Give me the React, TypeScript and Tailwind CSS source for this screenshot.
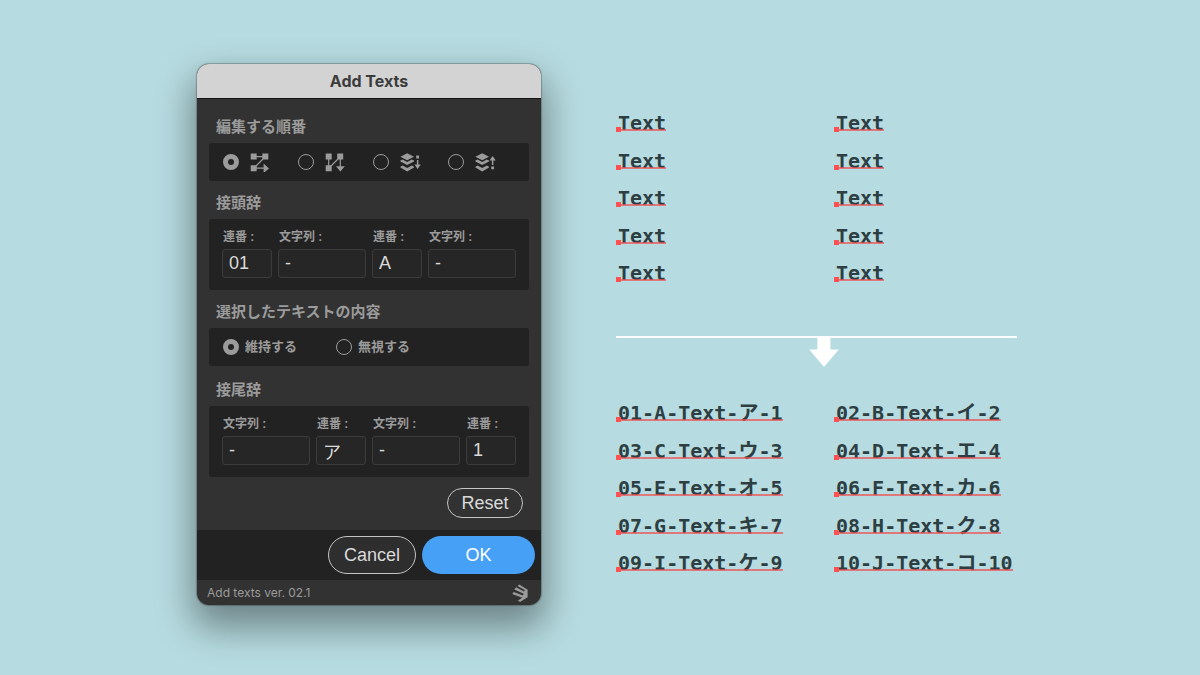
import { useId, type ReactNode } from "react";

const ORDERS = [
  { name: "row", icon: <RowOrderIcon /> },
  { name: "column", icon: <ColumnOrderIcon /> },
  { name: "layer down", icon: <LayerDownIcon /> },
  { name: "layer up", icon: <LayerUpIcon /> },
];

const PREFIX = [
  { label: "連番 :", value: "01" },
  { label: "文字列 :", value: "-", wide: true },
  { label: "連番 :", value: "A" },
  { label: "文字列 :", value: "-", wide: true },
];

const SUFFIX = [
  { label: "文字列 :", value: "-", wide: true },
  { label: "連番 :", value: "ア" },
  { label: "文字列 :", value: "-", wide: true },
  { label: "連番 :", value: "1" },
];

const BEFORE = Array.from({ length: 10 }, () => "Text");

const AFTER = [
  "01-A-Text-ア-1",
  "02-B-Text-イ-2",
  "03-C-Text-ウ-3",
  "04-D-Text-エ-4",
  "05-E-Text-オ-5",
  "06-F-Text-カ-6",
  "07-G-Text-キ-7",
  "08-H-Text-ク-8",
  "09-I-Text-ケ-9",
  "10-J-Text-コ-10",
];

function RowOrderIcon() {
  return (
    <svg viewBox="0 0 20 20" className="size-5" fill="currentColor" stroke="currentColor" aria-hidden="true">
      <path stroke="none" d="M.7 1.6h6v6h-6zM12.3 1.6h6v6h-6zM.7 13.2h6v6h-6zM13.6 11.6l5.4 4.8-5.4 4.6z" />
      <path fill="none" strokeWidth="1.2" d="M6 4.6h7M13 7L6 14M6 16.2h9" />
    </svg>
  );
}

function ColumnOrderIcon() {
  return (
    <svg viewBox="0 0 20 20" className="size-5" fill="currentColor" stroke="currentColor" aria-hidden="true">
      <path stroke="none" d="M.7 1.6h6v6h-6zM12.2 1.6h6v6h-6zM.7 13.2h6v6h-6zM11 14.2h8.8l-4.4 5.4z" />
      <path fill="none" strokeWidth="1.2" d="M3.7 7v7M6 14l7-7M15.3 7v9" />
    </svg>
  );
}

function Layers() {
  return (
    <>
      <path d="M7.2 1.2l6.8 3.5-6.8 3.5L.4 4.7z" />
      <path d="M.4 8.6l2.2-1.1 4.6 2.4 4.6-2.4L14 8.6v.9l-6.8 3.6L.4 9.5z" />
      <path d="M.4 14.8l2.2-1.2 4.6 2.4 4.6-2.4 2.2 1.2v.8l-6.8 3.8-6.8-3.8z" />
    </>
  );
}

function LayerDownIcon() {
  return (
    <svg viewBox="0 0 22 20" className="h-5 w-[22px]" fill="currentColor" aria-hidden="true">
      <Layers />
      <path d="M16.2 3.6h2.9v2.9h-2.9zM16.9 8h1.5v4.4h2.4L17.6 17l-3.1-4.6h2.4z" />
    </svg>
  );
}

function LayerUpIcon() {
  return (
    <svg viewBox="0 0 22 20" className="h-5 w-[22px]" fill="currentColor" aria-hidden="true">
      <Layers />
      <path d="M16.2 14.4h2.9v2.9h-2.9zM16.9 13h1.5V8.6h2.4L17.6 4l-3.1 4.6h2.4z" />
    </svg>
  );
}

function Logo() {
  return (
    <svg viewBox="0 0 16 18" className="h-[18px] w-4" fill="currentColor" aria-hidden="true">
      <path d="M7.3.6l8.3 5.2v7.4L8 18l-2-1.6 4.2-2.6L.2 10l1.6-2 9 3.4 1-1.6L2.3 5.4 4 3.3l8 4.2.8-1.6L5.5 2z" />
    </svg>
  );
}

function Section({ title, className, children }: { title: string; className: string; children: ReactNode }) {
  return (
    <fieldset>
      <legend className={`w-full pb-0.5 pl-[7px] text-[15px] font-semibold leading-7 text-[#9b9b9b] ${className}`}>
        {title}
      </legend>
      <div className="rounded-[3px] bg-[#222]">{children}</div>
    </fieldset>
  );
}

function Radio({ group, checked, name, children }: { group: string; checked: boolean; name?: string; children: ReactNode }) {
  return (
    <label className="flex items-center">
      <input
        type="radio"
        name={group}
        defaultChecked={checked}
        aria-label={name}
        className="size-4 shrink-0 appearance-none rounded-full border border-[#9b9b9b] checked:border-[5px]"
      />
      {children}
    </label>
  );
}

function Fields({ items }: { items: { label: string; value: string; wide?: boolean }[] }) {
  const id = useId();
  return (
    <div className="flex gap-1.5 px-[13px] pt-[9px] pb-3">
      {items.map((f, i) => (
        <div key={i} className={f.wide ? "w-[88px]" : "w-[50px]"}>
          <label htmlFor={`${id}-${i}`} className="block pl-px text-xs font-semibold leading-[18px] text-[#9b9b9b]">
            {f.label}
          </label>
          <input
            id={`${id}-${i}`}
            type="text"
            defaultValue={f.value}
            className="mt-[3px] block h-[29px] w-full rounded-[3px] border border-[#3c3c3c] bg-[#262626] px-1.5 text-lg text-[#dadada]"
          />
        </div>
      ))}
    </div>
  );
}

function Dialog() {
  return (
    <form
      role="dialog"
      aria-label="Add Texts"
      onSubmit={(e) => e.preventDefault()}
      className="w-[344px] shrink-0 overflow-hidden rounded-xl bg-[#323232] font-['Liberation_Sans','Noto_Sans_CJK_JP',sans-serif] shadow-[0_0_1px_1px_rgba(0,0,0,0.25),0_18px_36px_4px_rgba(0,0,0,0.4)]"
    >
      <h1 className="border-b border-[#161616] bg-[#d3d3d3] text-center font-['Inter',sans-serif] text-base font-bold leading-[34px] text-[#3c3c3c]">
        Add Texts
      </h1>

      <div className="px-3 pt-1.5 pb-3">
        <Section title="編集する順番" className="pt-2">
          <div className="grid h-[38px] grid-cols-[repeat(4,75px)] items-center pl-3.5 text-[#9b9b9b]">
            {ORDERS.map((o, i) => (
              <Radio key={o.name} group="order" checked={i === 0} name={o.name}>
                <span className="pl-[11px]">{o.icon}</span>
              </Radio>
            ))}
          </div>
        </Section>

        <Section title="接頭辞" className="pt-2">
          <Fields items={PREFIX} />
        </Section>

        <Section title="選択したテキストの内容" className="pt-2">
          <div className="grid h-[38px] grid-cols-[repeat(2,113px)] items-center pl-3.5 text-[13px] font-semibold text-[#9b9b9b]">
            <Radio group="content" checked>
              <span className="pl-1.5">維持する</span>
            </Radio>
            <Radio group="content" checked={false}>
              <span className="pl-1.5">無視する</span>
            </Radio>
          </div>
        </Section>

        <Section title="接尾辞" className="pt-2.5">
          <Fields items={SUFFIX} />
        </Section>

        <div className="flex justify-end pt-[11px] pr-1.5">
          <button type="reset" className="h-[30px] w-[76px] rounded-full border border-[#c4c4c4] text-lg leading-7 text-[#dadada]">
            Reset
          </button>
        </div>
      </div>

      <div className="flex justify-end gap-1.5 bg-[#222] p-1.5">
        <button type="button" className="h-[38px] w-[88px] rounded-full border border-[#c4c4c4] bg-[#2e2e2e] text-lg text-[#dadada]">
          Cancel
        </button>
        <button type="submit" className="h-[38px] w-[113px] rounded-full bg-[#46a0f5] text-lg text-white">
          OK
        </button>
      </div>

      <div className="flex h-[25px] items-center justify-between pr-[13px] pl-2.5 text-[#9b9b9b]">
        <span className="font-['Inter',sans-serif] text-xs">Add texts ver. 02.1</span>
        <Logo />
      </div>
    </form>
  );
}

function TextList({ items }: { items: string[] }) {
  return (
    <ul className="grid grid-cols-[218px_1fr] grid-rows-[38px_37px_38px_37px_24px] font-['DejaVu_Sans_Mono','Noto_Sans_CJK_JP',monospace] text-xl font-bold text-[#2d3f42]">
      {items.map((text, i) => (
        <li key={i} className="relative h-6 w-fit pl-0.5 leading-6 whitespace-nowrap">
          {text}
          {/* baseline with its anchor point */}
          <span className="absolute inset-x-0 bottom-1 h-0.5 bg-[#f04e50]/70" />
          <span className="absolute bottom-[3px] left-0 size-[5px] bg-[#ff5052]" />
        </li>
      ))}
    </ul>
  );
}

export default function App() {
  return (
    <main className="flex min-h-screen items-start justify-center gap-[75px] bg-[#b6dbe0] pt-16 pb-[70px] pl-3.5">
      <Dialog />
      <section className="w-[401px] shrink-0 pt-[47px]">
        <TextList items={BEFORE} />
        <div className="mt-[51px] mb-[33px] flex justify-center border-t-2 border-white pl-3.5">
          <svg viewBox="0 0 30 30" className="h-[30px] w-[30px]" fill="#fff" aria-hidden="true">
            <path d="M8.4 0h13v11.4h8.4L15 28.9.2 11.4h8.2z" />
          </svg>
        </div>
        <TextList items={AFTER} />
      </section>
    </main>
  );
}
